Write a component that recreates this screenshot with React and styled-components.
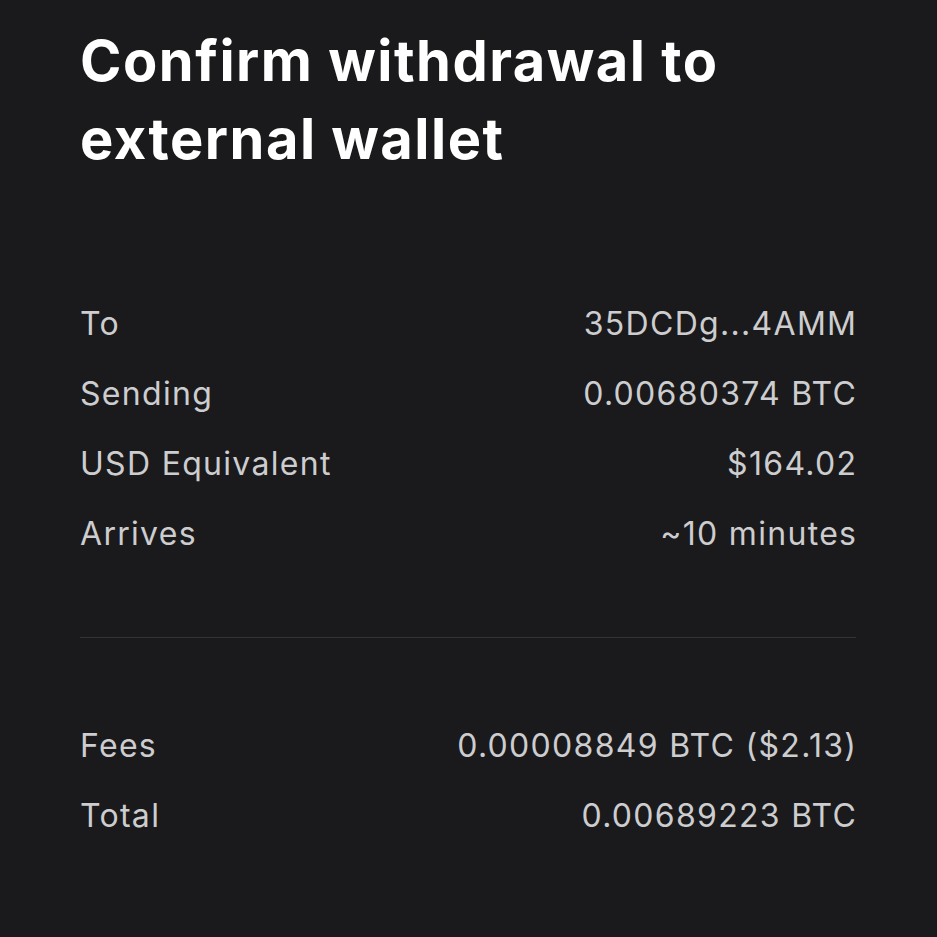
import React from "react";
import styled, { createGlobalStyle } from "styled-components";

const Global = createGlobalStyle`
  html, body { margin: 0; padding: 0; background: #1a1a1c; }
  body { font-family: "Inter", "Liberation Sans", sans-serif; }
`;

const Page = styled.div`
  width: 937px;
  height: 937px;
  box-sizing: border-box;
  background: #1a1a1c;
  padding: 22px 81px 0 80px;
  display: flex;
  flex-direction: column;
`;

const Title = styled.h1`
  margin: 0;
  color: #ffffff;
  font-family: "Inter", sans-serif;
  font-weight: 700;
  font-size: 56px;
  line-height: 78px;
  letter-spacing: 1.5px;
`;

const Section = styled.div`
  display: flex;
  flex-direction: column;
  margin-top: ${(p) => p.$top}px;
`;

const Row = styled.div`
  display: flex;
  justify-content: space-between;
  align-items: baseline;
  height: 70px;
  line-height: 70px;
  font-size: 32px;
  letter-spacing: 1.3px;
  color: #cdcdcf;
`;

const Label = styled.span``;
const Value = styled.span`
  margin-right: -1.3px;
`;

const Divider = styled.hr`
  margin: 0;
  border: none;
  height: 1px;
  background: #333335;
  margin-top: ${(p) => p.$top}px;
`;

const top = [
  ["To", "35DCDg...4AMM"],
  ["Sending", "0.00680374 BTC"],
  ["USD Equivalent", "$164.02"],
  ["Arrives", "~10 minutes"],
];
const bottom = [
  ["Fees", "0.00008849 BTC ($2.13)"],
  ["Total", "0.00689223 BTC"],
];

export default function App() {
  return (
    <>
      <Global />
      <Page>
        <Title>
          Confirm withdrawal to
          <br />
          external wallet
        </Title>
        <Section $top={111}>
          {top.map(([l, v]) => (
            <Row key={l}>
              <Label>{l}</Label>
              <Value>{v}</Value>
            </Row>
          ))}
        </Section>
        <Divider $top={68} />
        <Section $top={73}>
          {bottom.map(([l, v]) => (
            <Row key={l}>
              <Label>{l}</Label>
              <Value>{v}</Value>
            </Row>
          ))}
        </Section>
      </Page>
    </>
  );
}
